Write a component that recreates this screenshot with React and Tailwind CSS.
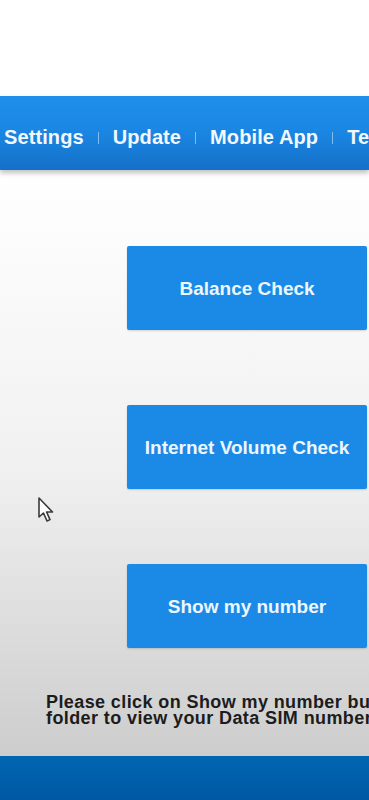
const navItems = ['Settings', 'Update', 'Mobile App', 'Tethering'];

function NavBar() {
    return (
        <div className="h-[74px] bg-linear-to-b from-[#1e8fea] via-[#1a86e2] to-[#1470c8] shadow-[0_3px_5px_rgba(0,0,0,0.25)] flex items-center pl-[4px] pt-[8px] whitespace-nowrap overflow-hidden relative z-10">
            {navItems.map((item, i) => (
                <div key={item} className="flex items-center">
                    {i > 0 && <span className="w-px h-[12px] bg-[#7fbcf0] mx-[14px] mt-[2px]" />}
                    <span className="text-[20px] font-bold text-[#f2f8ff] tracking-[0.1px]">{item}</span>
                </div>
            ))}
        </div>
    )
}

function ActionButton(props) {
    return (
        <button className="w-[240px] h-[84px] bg-[#1a8ae6] rounded-[2px] flex items-center justify-center pt-[2px] text-[19px] font-bold text-[#eef6ff] shadow-[0_1px_2px_rgba(0,0,0,0.15)]">
            { props.label }
        </button>
    )
}

function Cursor() {
    return (
        <svg className="absolute left-[37px] top-[496px]" width="18" height="28" viewBox="0 0 18 28">
            <path
                d="M2 2 L2 21 L6.5 17 L10 25 L13 23.6 L9.6 16 L15.5 16 Z"
                fill="#ffffff"
                stroke="#3a3a3a"
                strokeWidth="1.6"
                strokeLinejoin="round"
            />
        </svg>
    )
}

export default function App() {
    return (
        <div className="w-[369px] h-[800px] overflow-hidden relative flex flex-col bg-white" style={{ fontFamily: '"Liberation Sans", Arial, sans-serif' }}>
            <div className="h-[96px] bg-white shrink-0" />
            <NavBar />
            <div className="flex-1 bg-linear-to-b from-white via-[#f1f1f1] to-[#cdcdcd] flex flex-col">
                <div className="flex flex-col gap-[75px] pl-[127px] pt-[76px]">
                    <ActionButton label="Balance Check" />
                    <ActionButton label="Internet Volume Check" />
                    <ActionButton label="Show my number" />
                </div>
                <p className="mt-[46px] pl-[46px] text-[18px] leading-[16px] font-bold text-[#1c1c1c] whitespace-nowrap tracking-[0.4px]">
                    Please click on Show my number button in the<br />
                    folder to view your Data SIM number.
                </p>
            </div>
            <div className="h-[44px] shrink-0 bg-linear-to-b from-[#0066b2] to-[#0058a2]" />
            <Cursor />
        </div>
    )
}
